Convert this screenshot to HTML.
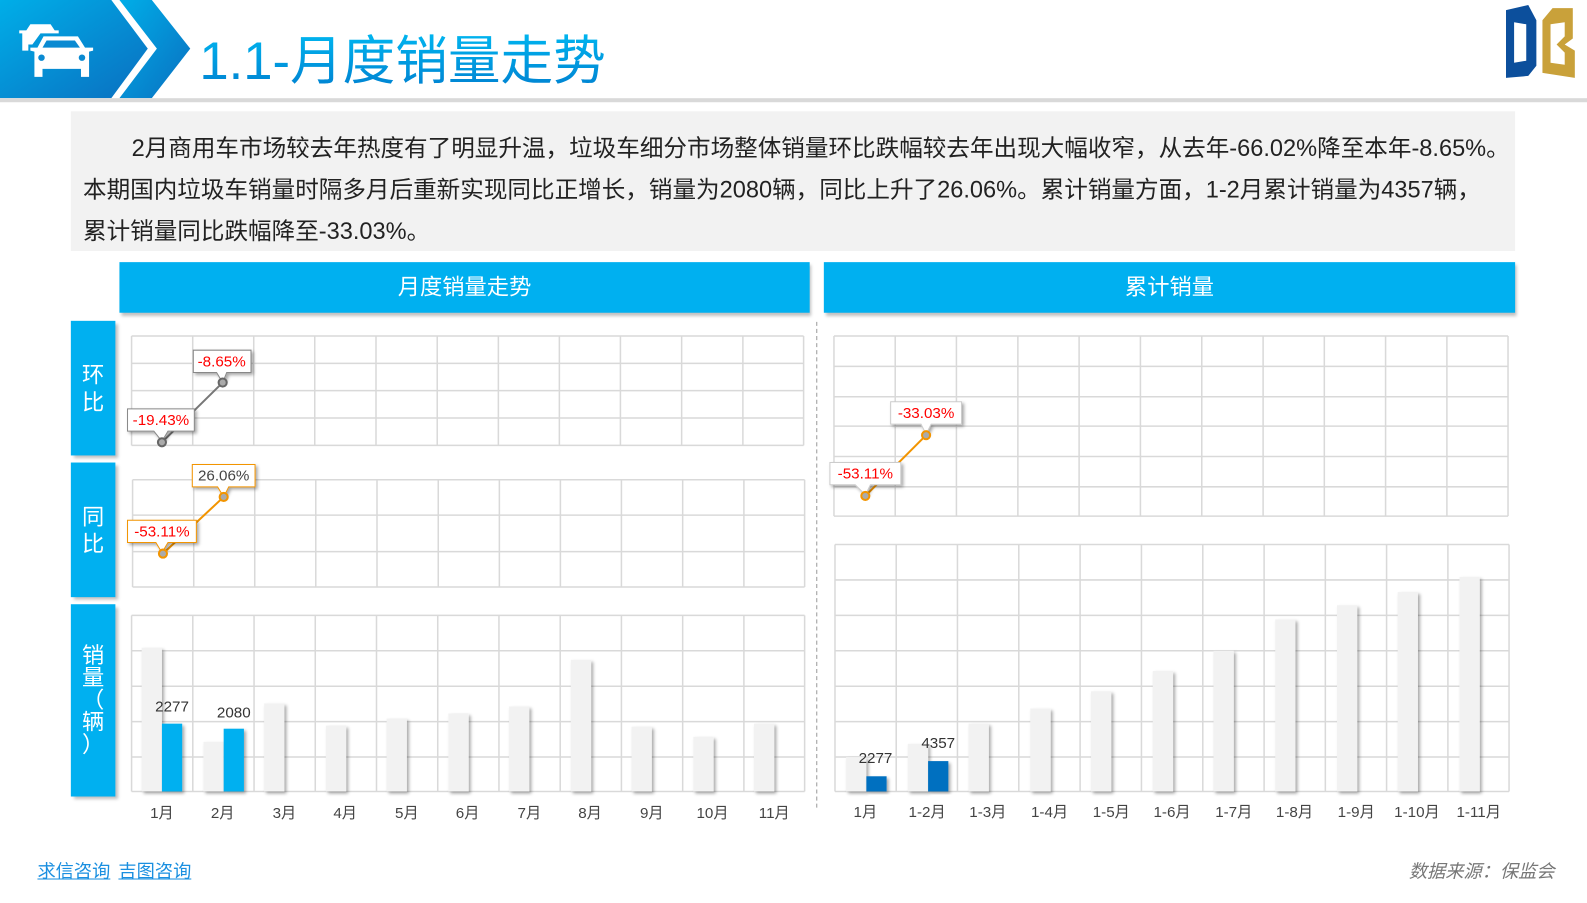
<!DOCTYPE html>
<html><head><meta charset="utf-8"><style>
*{margin:0;padding:0}
body{width:1587px;height:892px;background:#fff;position:relative;overflow:hidden;font-family:"Liberation Sans","Noto Sans CJK SC",sans-serif}
#w{position:absolute;left:0;top:0;width:1568px;height:892px;transform:scale(1.0121);transform-origin:0 0}
.abs{position:absolute}
.txt{left:70px;top:110px;width:1427px;height:138px;background:#f2f2f2;font-size:23.3px;color:#222;line-height:41px;padding:16px 0 0 12px;box-sizing:border-box;white-space:nowrap}
.hd{background:#00b0f0;color:#fff;font-size:22px;text-align:center;line-height:50px;height:50px;top:259px;box-shadow:2px 3px 3px rgba(0,0,0,.25)}
.side{left:70px;width:44px;background:#00b0f0;color:#fff;font-size:22px;display:flex;align-items:center;justify-content:center;text-align:center;line-height:27px;box-shadow:3px 3px 3px rgba(0,0,0,.25)}
</style></head><body><div id="w">
<svg class="abs" style="left:0;top:0" width="1587" height="110">
<defs><linearGradient id="g" x1="0" y1="0" x2="1" y2="1"><stop offset="0" stop-color="#00aee8"/><stop offset="1" stop-color="#0a6fc0"/></linearGradient>
<linearGradient id="t" x1="0" y1="0" x2="0" y2="1"><stop offset="0" stop-color="#00b6f0"/><stop offset="1" stop-color="#0080d0"/></linearGradient></defs>
<polygon points="0,0 110,0 146,48 110,97 0,97" fill="url(#g)"/>
<polygon points="118,0 150,0 188,48 150,97 118,97 155,48" fill="url(#g)"/>
<rect x="0" y="97" width="1587" height="4" fill="#d9d9d9"/>
<g fill="#fff">
<path d="M26,30 L30,24 L50,24 L54,30 L58,30 L58,33 L40,33 L32,44 L28,44 L28,50 L22,50 L22,33 L19,33 L19,30Z"/>
<path d="M37,47 L43,36 L77,36 L84,47 L92,47 L92,50 L88,51 L88,76 L80,76 L80,68 L42,68 L42,76 L34,76 L34,51 L30,50 L30,47Z"/>
<path d="M42,47 L46,40 L74,40 L79,47Z" fill="#0a8ad2"/>
<circle cx="41" cy="57" r="3.2" fill="#0a8ad2"/><circle cx="81" cy="57" r="3.2" fill="#0a8ad2"/></g>
<text x="197" y="78" font-size="52" fill="url(#t)" font-family="Liberation Sans,Noto Sans CJK SC,sans-serif">1.1-月度销量走势</text>
<path d="M1488,10 L1510,5 L1518,20 L1518,65 L1510,75 L1488,77 Z M1496,22 L1496,62 L1508,60 L1508,24 Z" fill="#0c4f9c" fill-rule="evenodd"/>
<path d="M1524,20 L1534,8 L1554,8 L1554,38 L1546,44 L1556,50 L1556,77 L1524,72 Z M1532,24 L1532,62 L1546,64 L1546,52 L1538,44 L1546,36 L1546,22 Z" fill="#c9a13a" fill-rule="evenodd"/>
</svg>
<div class="abs txt"><span style="padding-left:48px">2月商用车市场较去年热度有了明显升温，垃圾车细分市场整体销量环比跌幅较去年出现大幅收窄，从去年-66.02%降至本年-8.65%。</span><br>本期国内垃圾车销量时隔多月后重新实现同比正增长，销量为2080辆，同比上升了26.06%。累计销量方面，1-2月累计销量为4357辆，<br>累计销量同比跌幅降至-33.03%。</div>
<div class="abs hd" style="left:118px;width:682px">月度销量走势</div>
<div class="abs hd" style="left:814px;width:683px">累计销量</div>
<div class="abs side" style="top:317px;height:133px">环<br>比</div>
<div class="abs side" style="top:457px;height:133px">同<br>比</div>
<div class="abs side" style="top:597px;height:190px;line-height:22px">销<br>量<br>（<br>辆<br>）</div>
<svg class="abs" style="left:0;top:0" width="1587" height="892" font-family="Liberation Sans,Noto Sans CJK SC,sans-serif">
<defs><filter id="sh"><feDropShadow dx="2" dy="2" stdDeviation="1.5" flood-opacity=".35"/></filter></defs>
<g stroke="#d9d9d9" stroke-width="1.5" fill="none">
<path d="M130,332H794M130,359H794M130,386H794M130,413H794M130,440H794"/>
<path d="M130,332V440M190.4,332V440M250.7,332V440M311,332V440M371.5,332V440M432,332V440M492.4,332V440M552.7,332V440M613,332V440M673.5,332V440M734,332V440M794,332V440"/>
<path d="M131,474H795M131,509H795M131,545H795M131,580H795"/>
<path d="M131,474V580M191.4,474V580M251.7,474V580M312,474V580M372.5,474V580M433,474V580M493.4,474V580M553.7,474V580M614,474V580M674.5,474V580M735,474V580M795,474V580"/>
<path d="M130,608H795M130,643H795M130,678H795M130,713H795M130,748H795M130,782H795"/>
<path d="M130,608V782M190.5,608V782M251,608V782M311.5,608V782M372,608V782M432.5,608V782M493,608V782M553.5,608V782M614,608V782M674.5,608V782M735,608V782M795,608V782"/>
<path d="M824,332H1490M824,362H1490M824,392H1490M824,421H1490M824,451H1490M824,481H1490M824,510H1490"/>
<path d="M824,332V510M884.5,332V510M945,332V510M1005.7,332V510M1066.2,332V510M1126.8,332V510M1187.4,332V510M1248,332V510M1308.5,332V510M1369,332V510M1429.6,332V510M1490,332V510"/>
<path d="M825,538H1491M825,573H1491M825,608H1491M825,643H1491M825,678H1491M825,713H1491M825,748H1491M825,782H1491"/>
<path d="M825,538V782M885.5,538V782M946,538V782M1006.6,538V782M1067.2,538V782M1127.8,538V782M1188.4,538V782M1249,538V782M1309.5,538V782M1370,538V782M1430.6,538V782M1491,538V782"/>
</g>
<line x1="807" y1="318" x2="807" y2="800" stroke="#999" stroke-dasharray="4,3"/>
<g fill="#f2f2f2" filter="url(#sh)">
<rect x="140" y="640" width="20" height="142"/><rect x="201" y="733" width="20" height="49"/>
<rect x="261" y="695" width="20" height="87"/><rect x="322" y="717" width="20" height="65"/>
<rect x="382" y="710" width="20" height="72"/><rect x="443" y="705" width="20" height="77"/>
<rect x="503" y="698" width="20" height="84"/><rect x="564" y="652" width="20" height="130"/>
<rect x="624" y="718" width="20" height="64"/><rect x="685" y="728" width="20" height="54"/>
<rect x="745" y="715" width="20" height="67"/>
</g>
<g fill="#00b0f0" filter="url(#sh)"><rect x="160" y="715" width="20" height="67"/><rect x="221" y="720" width="20" height="62"/></g>
<g font-size="15" fill="#333" text-anchor="middle"><text x="170" y="703">2277</text><text x="231" y="709">2080</text></g>
<g fill="#f2f2f2" filter="url(#sh)">
<rect x="836" y="748" width="20" height="34"/><rect x="897" y="735" width="20" height="47"/>
<rect x="957" y="715" width="20" height="67"/><rect x="1018" y="700" width="20" height="82"/>
<rect x="1078" y="683" width="20" height="99"/><rect x="1139" y="663" width="20" height="119"/>
<rect x="1199" y="643" width="20" height="139"/><rect x="1260" y="612" width="20" height="170"/>
<rect x="1321" y="598" width="20" height="184"/><rect x="1381" y="585" width="20" height="197"/>
<rect x="1442" y="570" width="20" height="212"/>
</g>
<g fill="#0070c0" filter="url(#sh)"><rect x="856" y="767" width="20" height="15"/><rect x="917" y="752" width="20" height="30"/></g>
<g font-size="15" fill="#333" text-anchor="middle"><text x="865" y="754">2277</text><text x="927" y="739">4357</text></g>
<g font-size="15" fill="#444" text-anchor="middle">
<text x="160" y="808">1月</text><text x="220" y="808">2月</text><text x="281" y="808">3月</text><text x="341" y="808">4月</text><text x="402" y="808">5月</text><text x="462" y="808">6月</text><text x="523" y="808">7月</text><text x="583" y="808">8月</text><text x="644" y="808">9月</text><text x="704" y="808">10月</text><text x="765" y="808">11月</text>
<text x="855" y="807">1月</text><text x="916" y="807">1-2月</text><text x="976" y="807">1-3月</text><text x="1037" y="807">1-4月</text><text x="1098" y="807">1-5月</text><text x="1158" y="807">1-6月</text><text x="1219" y="807">1-7月</text><text x="1279" y="807">1-8月</text><text x="1340" y="807">1-9月</text><text x="1400" y="807">1-10月</text><text x="1461" y="807">1-11月</text>
</g>
<line x1="160" y1="437" x2="220" y2="378" stroke="#777" stroke-width="2"/>
<line x1="161" y1="547" x2="221" y2="491" stroke="#f29400" stroke-width="2"/>
<line x1="855" y1="490" x2="915" y2="430" stroke="#f29400" stroke-width="2"/>
<g font-size="15" text-anchor="middle" filter="url(#sh)">
<path d="M191,346h57v22h-24l-4,10l-6,-10h-23z" fill="#fff" stroke="#888"/>
<path d="M126,404h66v22h-26l-6,10l-8,-10h-26z" fill="#fff" stroke="#888"/>
<path d="M190,459h62v22h-26l-5,10l-6,-10h-25z" fill="#fff" stroke="#f29400"/>
<path d="M126,514h68v22h-28l-6,10l-6,-10h-28z" fill="#fff" stroke="#f29400"/>
<path d="M880,397h70v22h-30l-5,10l-5,-10h-30z" fill="#fff" stroke="#ccc"/>
<path d="M820,457h70v22h-30l-5,10l-10,-10h-25z" fill="#fff" stroke="#ccc"/>
</g>
<g fill="#aaa" stroke-width="2"><circle cx="220" cy="378" r="4" stroke="#666"/><circle cx="160" cy="437" r="4" stroke="#666"/>
<circle cx="221" cy="491" r="4" stroke="#f29400"/><circle cx="161" cy="547" r="4" stroke="#f29400"/>
<circle cx="915" cy="430" r="4" stroke="#f29400"/><circle cx="855" cy="490" r="4" stroke="#f29400"/></g>
<g font-size="15" text-anchor="middle">
<text x="219" y="362" fill="#f00">-8.65%</text><text x="159" y="420" fill="#f00">-19.43%</text>
<text x="221" y="475" fill="#444">26.06%</text><text x="160" y="530" fill="#f00">-53.11%</text>
<text x="915" y="413" fill="#f00">-33.03%</text><text x="855" y="473" fill="#f00">-53.11%</text>
</g>
</svg>
<div class="abs" style="left:37px;top:847px;font-size:18px;color:#1a8fe0;text-decoration:underline">求信咨询</div>
<div class="abs" style="left:117px;top:847px;font-size:18px;color:#1a8fe0;text-decoration:underline">吉图咨询</div>
<div class="abs" style="left:1392px;top:847px;font-size:18px;color:#777;font-style:italic">数据来源：保监会</div>
</div></body></html>
